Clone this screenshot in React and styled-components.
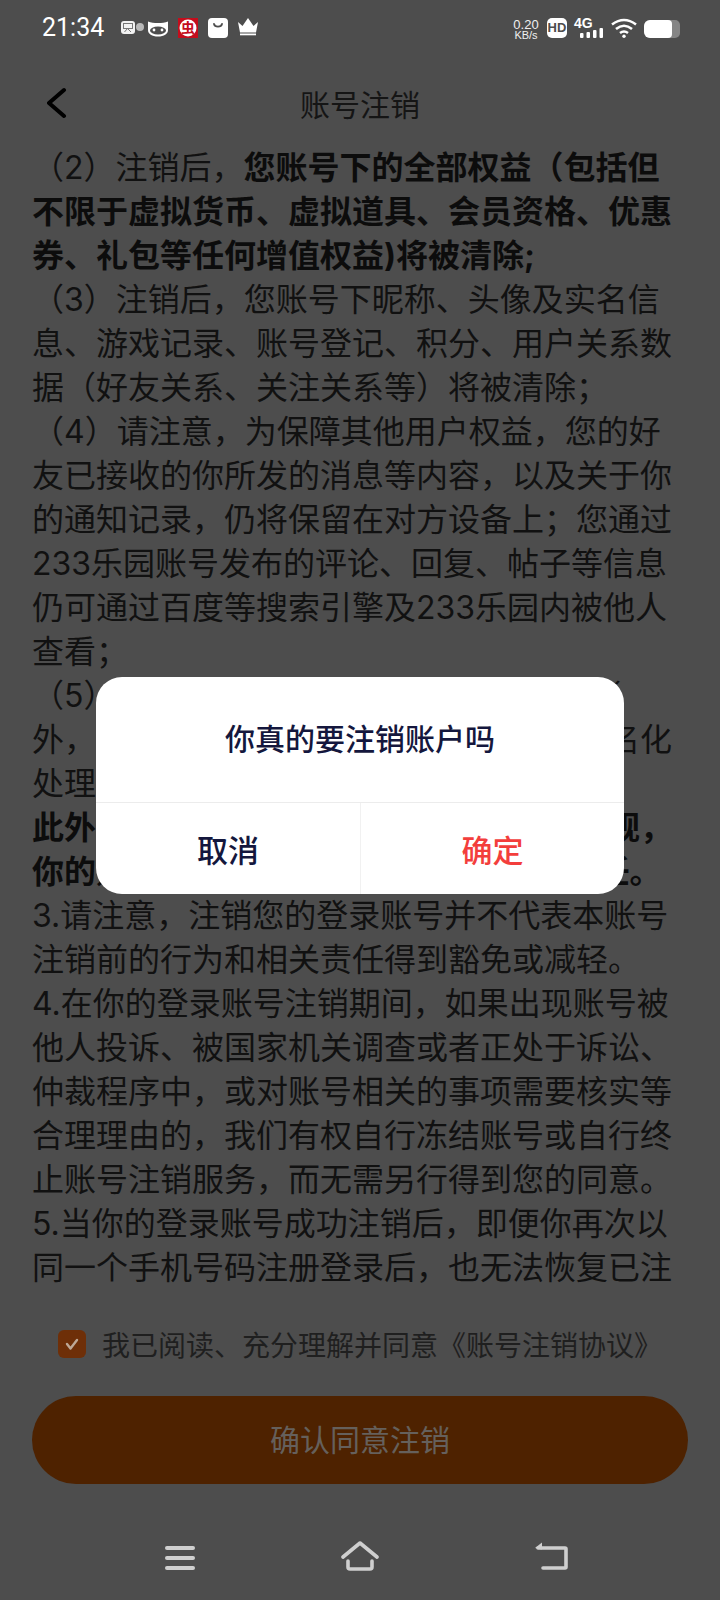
import React from 'react';
import styled, { createGlobalStyle } from 'styled-components';

const GlobalStyle = createGlobalStyle`
  html, body {
    margin: 0;
    padding: 0;
    background: #4d4d4d;
  }
  * {
    box-sizing: border-box;
  }
`;

const Page = styled.div`
  position: relative;
  width: 720px;
  height: 1600px;
  overflow: hidden;
  background: #4d4d4d;
  font-family: "Noto Sans CJK SC", "Noto Sans", sans-serif;
  text-autospace: no-autospace;
`;

const StatusBar = styled.div`
  height: 56px;
  padding: 18px 40px 0 42px;
  display: flex;
  justify-content: space-between;
  align-items: flex-start;
`;

const StatusLeft = styled.div`
  display: flex;
  align-items: center;
  height: 20px;
`;

const StatusRight = styled.div`
  display: flex;
  align-items: flex-start;
  gap: 7px;
  height: 20px;
`;

const Time = styled.span`
  width: 76px;
  font-family: Roboto, sans-serif;
  font-size: 25px;
  line-height: 20px;
  color: #fff;
`;

const NetSpeed = styled.div`
  width: 28px;
  margin-left: -2px;
  padding-top: 1px;
  font-family: "Liberation Sans", sans-serif;
  color: #f0f0f0;
  text-align: center;
`;

const NetValue = styled.div`
  font-size: 13px;
  line-height: 11px;
`;

const NetUnit = styled.div`
  font-size: 11px;
  line-height: 11px;
`;

const HdBadge = styled.span`
  width: 20px;
  height: 20px;
  border-radius: 5px;
  background: #fff;
  color: #4d4d4d;
  font-family: "Liberation Sans", sans-serif;
  font-size: 13px;
  line-height: 20px;
  font-weight: 700;
  text-align: center;
`;

const Signal = styled.div`
  width: 30px;
  height: 20px;
  display: flex;
  flex-direction: column;
`;

const SignalType = styled.span`
  font-family: "Liberation Sans", sans-serif;
  font-size: 14px;
  line-height: 10px;
  font-weight: 700;
  color: #fff;
`;

const Battery = styled.div`
  width: 36px;
  height: 18px;
  margin-top: 2px;
  border-radius: 6px 5px 5px 6px;
  overflow: hidden;
  background: #858585;
`;

const BatteryFill = styled.div`
  height: 100%;
  width: ${(p) => p.$level}%;
  border-radius: 4px;
  background: #fff;
`;

const Header = styled.div`
  height: 88px;
  padding: 6px 0 0 47px;
  display: grid;
  grid-template-columns: 20px 1fr 67px;
  align-items: center;
`;

const Title = styled.h1`
  margin: 0;
  font-size: 30px;
  font-weight: 400;
  color: #151515;
  text-align: center;
`;

const Content = styled.div`
  height: 1146px;
  padding: 2px 48px 0 32px;
  overflow: hidden;
  font-family: Inter, "Noto Sans CJK SC", sans-serif;
  font-size: 32px;
  line-height: 44px;
  color: #111;
`;

const Para = styled.p`
  margin: 0;
`;

const Strong = styled.b`
  font-weight: 700;
  color: #0c0c0c;
`;

const AgreeRow = styled.label`
  margin-top: 40px;
  height: 28px;
  display: flex;
  justify-content: center;
  align-items: center;
  gap: 16px;
  font-size: 28px;
  color: #1f1f1f;
`;

const CheckBox = styled.span`
  width: 28px;
  height: 28px;
  border-radius: 6px;
  background: #6e2f08;
  display: flex;
  align-items: center;
  justify-content: center;
`;

const SubmitButton = styled.button`
  display: block;
  width: 656px;
  height: 88px;
  margin: 38px 32px 0;
  padding: 0 0 5px;
  border: none;
  border-radius: 44px;
  background: #4e2200;
  color: #65605c;
  font-family: inherit;
  font-size: 30px;
`;

const NavBar = styled.div`
  margin-top: 57px;
  padding-left: 160px;
  display: grid;
  grid-template-columns: 180px 190px 40px;
`;

const Overlay = styled.div`
  position: absolute;
  inset: 0;
  padding-top: 677px;
  display: flex;
  justify-content: center;
  align-items: flex-start;
`;

const Dialog = styled.div`
  width: 528px;
  height: 217px;
  border-radius: 26px;
  overflow: hidden;
  background: #fff;
  display: flex;
  flex-direction: column;
`;

const DialogTitle = styled.div`
  height: 126px;
  padding-bottom: 6px;
  display: flex;
  align-items: center;
  justify-content: center;
  font-size: 30px;
  font-weight: 500;
  color: #14173d;
  border-bottom: 1px solid #ececec;
`;

const DialogActions = styled.div`
  flex: 1;
  display: grid;
  grid-template-columns: 1fr 1fr;
`;

const DialogButton = styled.button`
  padding: 0;
  border: none;
  border-left: ${(p) => (p.$danger ? '1px solid #f1f1f1' : 'none')};
  background: transparent;
  color: ${(p) => (p.$danger ? '#f33e3c' : '#14173d')};
  font-family: inherit;
  font-size: 31px;
  font-weight: 500;
`;

function NoticeIcons() {
  return (
    <>
      <svg width="30" height="20" viewBox="0 0 30 20">
        <rect x="3" y="3" width="14" height="13" rx="3" fill="#f2f2f2" />
        <rect x="5.5" y="5.5" width="9" height="5" fill="none" stroke="#777" strokeWidth="1" />
        <path d="M6.5 14l3-3.5 3.5 3.5" fill="none" stroke="#777" strokeWidth="1" />
        <circle cx="22" cy="9" r="4" fill="#b9b9b9" />
      </svg>
      <svg width="30" height="20" viewBox="0 0 30 20">
        <path d="M0 3.500C3 5 6 5 10 5s7 0 10-1.500V12c0 4-4 6.500-10 6.500S0 16 0 12z" fill="#fff" />
        <path d="M0 4l2 2-2 3zM20 4l-2 2 2 3z" fill="#fff" />
        <ellipse cx="10" cy="12.500" rx="8" ry="4" fill="#4d4d4d" />
        <circle cx="6" cy="12" r="1.400" fill="#fff" />
        <circle cx="14" cy="12" r="1.400" fill="#fff" />
      </svg>
      <svg width="30" height="20" viewBox="0 0 30 20">
        <rect width="20" height="20" fill="#c40d1c" />
        <circle cx="10" cy="10" r="8.500" fill="#fff" />
        <text x="10" y="15" fontSize="14" fontWeight="700" fill="#c40d1c" textAnchor="middle">虫</text>
      </svg>
      <svg width="30" height="20" viewBox="0 0 30 20">
        <rect width="20" height="20" rx="4" fill="#fff" />
        <path d="M6 6c.8 3.400 7.200 3.400 8 0" fill="none" stroke="#4d4d4d" strokeWidth="1.800" strokeLinecap="round" />
      </svg>
      <svg width="20" height="20" viewBox="0 0 20 20">
        <path d="M0 4l4.500 4L10 0l5.500 8L20 4l-2 10.500H2z" fill="#fff" />
        <rect x="2" y="15.500" width="16" height="1.800" fill="#fff" />
      </svg>
    </>
  );
}

function App() {
  return (
    <Page lang="zh-CN">
      <GlobalStyle />
      <StatusBar>
        <StatusLeft>
          <Time>21:34</Time>
          <NoticeIcons />
        </StatusLeft>
        <StatusRight>
          <NetSpeed>
            <NetValue>0.20</NetValue>
            <NetUnit>KB/s</NetUnit>
          </NetSpeed>
          <HdBadge>HD</HdBadge>
          <Signal>
            <SignalType>4G</SignalType>
            <svg width="30" height="10" viewBox="0 0 30 10">
              <rect x="6" y="5" width="3.500" height="5" rx="1" fill="#fff" />
              <rect x="12.500" y="4" width="3.500" height="6" rx="1" fill="#fff" />
              <rect x="19" y="2" width="3.500" height="8" rx="1" fill="#fff" />
              <rect x="25.500" y="0" width="3.500" height="10" rx="1" fill="#fff" />
            </svg>
          </Signal>
          <svg width="26" height="20" viewBox="0 0 26 20">
            <g fill="none" stroke="#fff" strokeWidth="2.600">
              <path d="M1 6.500Q13 -2.500 25 6.500" />
              <path d="M5 11Q13 4.500 21 11" />
              <path d="M9 15Q13 12 17 15" />
            </g>
            <circle cx="13" cy="18.300" r="1.700" fill="#fff" />
          </svg>
          <Battery>
            <BatteryFill $level={77} />
          </Battery>
        </StatusRight>
      </StatusBar>

      <Header>
        <svg width="20" height="32" viewBox="0 0 20 32">
          <path d="M17 3L2 16l15 13" fill="none" stroke="#000" strokeWidth="4" strokeLinecap="round" strokeLinejoin="round" />
        </svg>
        <Title>账号注销</Title>
      </Header>

      <Content>
        <Para>
          （2）注销后，<Strong>您账号下的全部权益（包括但不限于虚拟货币、虚拟道具、会员资格、优惠券、礼包等任何增值权益)将被清除;</Strong>
        </Para>
        <Para>（3）注销后，您账号下昵称、头像及实名信息、游戏记录、账号登记、积分、用户关系数据（好友关系、关注关系等）将被清除；</Para>
        <Para>（4）请注意，为保障其他用户权益，您的好友已接收的你所发的消息等内容，以及关于你的通知记录，仍将保留在对方设备上；您通过233乐园账号发布的评论、回复、帖子等信息仍可通过百度等搜索引擎及233乐园内被他人查看；</Para>
        <Para>（5）注销后，233乐园除法律规定的情形外，我们将对您的个人信息进行删除或匿名化处理，您的账号信息将无法找回。</Para>
        <Para>
          <Strong>此外，若您的账号使用行为违反了相关法规，你的账号注销,不影响,依法追究相应的责任。</Strong>
        </Para>
        <Para>3.请注意，注销您的登录账号并不代表本账号注销前的行为和相关责任得到豁免或减轻。</Para>
        <Para>4.在你的登录账号注销期间，如果出现账号被他人投诉、被国家机关调查或者正处于诉讼、仲裁程序中，或对账号相关的事项需要核实等合理理由的，我们有权自行冻结账号或自行终止账号注销服务，而无需另行得到您的同意。</Para>
        <Para>5.当你的登录账号成功注销后，即便你再次以同一个手机号码注册登录后，也无法恢复已注销账号及相关数据。</Para>
      </Content>

      <AgreeRow>
        <CheckBox>
          <svg width="16" height="16" viewBox="0 0 16 16">
            <path d="M3 8l3.500 4.500L13 4" fill="none" stroke="#bda896" strokeWidth="2.400" strokeLinecap="round" strokeLinejoin="round" />
          </svg>
        </CheckBox>
        我已阅读、充分理解并同意《账号注销协议》
      </AgreeRow>

      <SubmitButton>确认同意注销</SubmitButton>

      <NavBar>
        <svg width="40" height="30" viewBox="0 0 40 30">
          <g stroke="#cfcfcf" strokeWidth="4" strokeLinecap="round">
            <path d="M7 7h26" />
            <path d="M7 17h26" />
            <path d="M7 27h26" />
          </g>
        </svg>
        <svg width="40" height="30" viewBox="0 0 40 30">
          <g fill="none" stroke="#cfcfcf" strokeWidth="3.600" strokeLinecap="round" strokeLinejoin="round">
            <path d="M3 16L20 2l17 14" />
            <path d="M8 20v6a2 2 0 0 0 2 2h20a2 2 0 0 0 2-2v-6" />
          </g>
        </svg>
        <svg width="40" height="30" viewBox="0 0 40 30">
          <path d="M8 7h27a1 1 0 0 1 1 1v18a1 1 0 0 1-1 1H13" fill="none" stroke="#cfcfcf" strokeWidth="3.600" strokeLinecap="round" strokeLinejoin="round" />
          <path d="M5 7l7-5.500V8.500z" fill="#cfcfcf" />
        </svg>
      </NavBar>

      <Overlay>
        <Dialog>
          <DialogTitle>你真的要注销账户吗</DialogTitle>
          <DialogActions>
            <DialogButton>取消</DialogButton>
            <DialogButton $danger>确定</DialogButton>
          </DialogActions>
        </Dialog>
      </Overlay>
    </Page>
  );
}

export default App;
